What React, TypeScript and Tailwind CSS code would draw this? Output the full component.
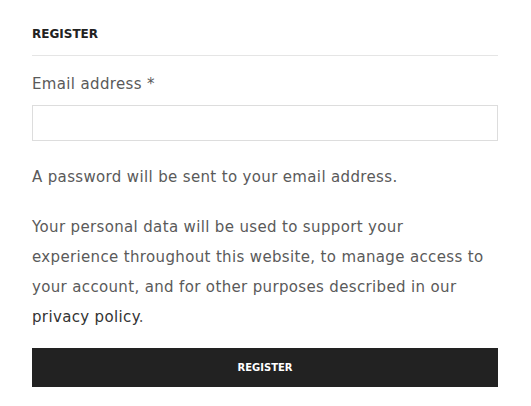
const App = () => {
  return (
    <div className="min-h-screen bg-white font-['DejaVu_Sans',sans-serif]">
      <div className="ml-[32px] w-[466px] pt-[24px]">
        <h2 className="h-[20px] text-[12px] font-bold leading-[20px] text-[#222]">
          REGISTER
        </h2>
        <div className="mt-[11px] h-px bg-[#e5e5e5]" />

        <label className="mt-[13px] block text-[15px] leading-[30px] tracking-[0.35px] text-[#5a5a5a]">
          Email address *
        </label>
        <input
          type="email"
          className="mt-[6px] block h-[36px] w-full border border-[#dddddd] bg-white px-3 outline-none"
        />

        <p className="mt-[21px] text-[15px] leading-[30px] tracking-[0.35px] text-[#5a5a5a]">
          A password will be sent to your email address.
        </p>

        <p className="mt-[20px] w-[458px] text-[15px] leading-[30px] tracking-[0.35px] text-[#5a5a5a]">
          Your personal data will be used to support your experience throughout
          this website, to manage access to your account, and for other
          purposes described in our{" "}
          <a href="#" className="text-[#333]">
            privacy policy
          </a>
          .
        </p>

        <button
          type="button"
          className="mt-[16px] flex h-[39px] w-full items-center justify-center bg-[#222222] text-[10px] font-semibold text-white"
        >
          REGISTER
        </button>
      </div>
    </div>
  );
};

export default App;
